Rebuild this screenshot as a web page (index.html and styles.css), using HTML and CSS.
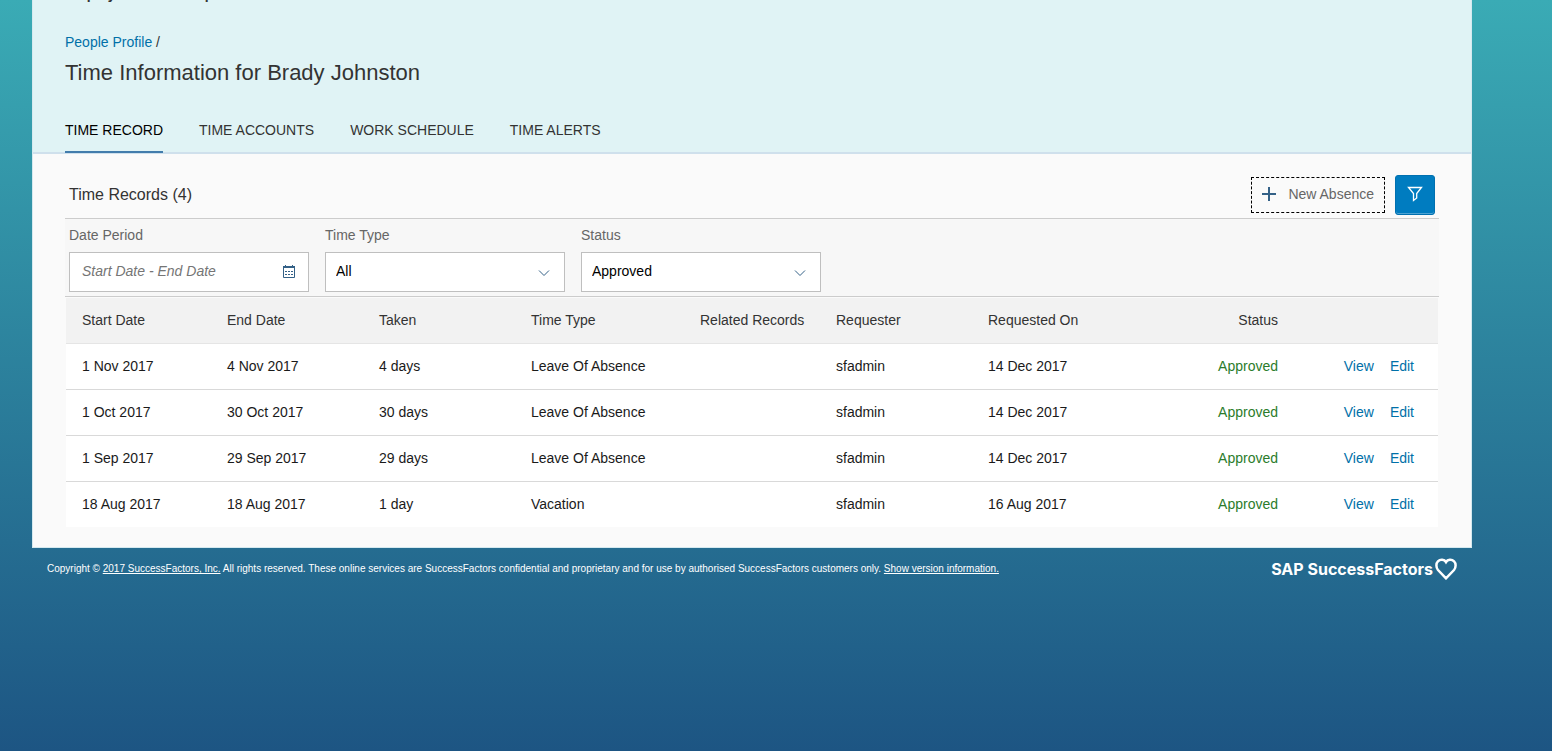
FILE: index.html
```
<!DOCTYPE html>
<html lang="en">
<head>
  <meta charset="UTF-8">
  <meta name="viewport" content="width=device-width, initial-scale=1.0">
  <title>Time Information</title>
  <link rel="stylesheet" href="styles.css">
</head>
<body>
  <main class="page">
    <header class="header">
      <div class="module">Employee Time Recap</div>
      <nav class="breadcrumb"><a href="#">People Profile</a> /</nav>
      <h1>Time Information for Brady Johnston</h1>
      <nav class="tabs">
        <a class="tab active" href="#">TIME RECORD</a>
        <a class="tab" href="#">TIME ACCOUNTS</a>
        <a class="tab" href="#">WORK SCHEDULE</a>
        <a class="tab" href="#">TIME ALERTS</a>
      </nav>
    </header>

    <section class="content">
      <div class="toolbar">
        <h2>Time Records (4)</h2>
        <button class="new-absence" type="button">
          <svg width="16" height="16" viewBox="0 0 16 16"><path d="M8 1v14M1 8h14" stroke="#346187" stroke-width="2"/></svg>
          New Absence
        </button>
        <button class="filter-button" type="button" aria-label="Filter">
          <svg width="16" height="16" viewBox="0 0 16 16" fill="none" stroke="#fff" stroke-width="1.3"><path d="M1.500 1.500h13l-4.800 6v4.500l-3.200 2.500v-7z"/></svg>
        </button>
      </div>

      <form class="filters">
        <div class="field">
          <label for="period">Date Period</label>
          <div class="control">
            <input id="period" type="text" placeholder="Start Date - End Date">
            <svg class="calendar" width="14" height="14" viewBox="0 0 14 14" fill="none" stroke="#346187"><path d="M1.500 1.500h11v11h-11z"/><path d="M1 2h12" stroke-width="2"/><path d="M3.500 0v2M10.500 0v2"/><path d="M3 6.500h2M6 6.500h2M9 6.500h2M3 9.500h2M6 9.500h2M9 9.500h2"/></svg>
          </div>
        </div>
        <div class="field">
          <label for="type">Time Type</label>
          <div class="control">
            <select id="type"><option>All</option><option>Leave Of Absence</option><option>Vacation</option></select>
            <svg class="arrow" width="12" height="8" viewBox="0 0 12 8" fill="none" stroke="#346187"><path d="M1 1.500l5 5 5-5"/></svg>
          </div>
        </div>
        <div class="field">
          <label for="status">Status</label>
          <div class="control">
            <select id="status"><option>Approved</option><option>Pending</option></select>
            <svg class="arrow" width="12" height="8" viewBox="0 0 12 8" fill="none" stroke="#346187"><path d="M1 1.500l5 5 5-5"/></svg>
          </div>
        </div>
      </form>

      <div class="table-wrap">
        <table>
          <colgroup>
            <col class="col-start"><col class="col-wide"><col class="col-wide"><col class="col-type"><col class="col-related">
            <col class="col-wide"><col class="col-wide"><col class="col-status"><col class="col-actions">
          </colgroup>
          <thead>
            <tr><th>Start Date</th><th>End Date</th><th>Taken</th><th>Time Type</th><th>Related Records</th><th>Requester</th><th>Requested On</th><th class="status">Status</th><th></th></tr>
          </thead>
          <tbody>
            <tr><td>1 Nov 2017</td><td>4 Nov 2017</td><td>4 days</td><td>Leave Of Absence</td><td></td><td>sfadmin</td><td>14 Dec 2017</td><td class="status">Approved</td><td class="actions"><a href="#">View</a><a href="#">Edit</a></td></tr>
            <tr><td>1 Oct 2017</td><td>30 Oct 2017</td><td>30 days</td><td>Leave Of Absence</td><td></td><td>sfadmin</td><td>14 Dec 2017</td><td class="status">Approved</td><td class="actions"><a href="#">View</a><a href="#">Edit</a></td></tr>
            <tr><td>1 Sep 2017</td><td>29 Sep 2017</td><td>29 days</td><td>Leave Of Absence</td><td></td><td>sfadmin</td><td>14 Dec 2017</td><td class="status">Approved</td><td class="actions"><a href="#">View</a><a href="#">Edit</a></td></tr>
            <tr><td>18 Aug 2017</td><td>18 Aug 2017</td><td>1 day</td><td>Vacation</td><td></td><td>sfadmin</td><td>16 Aug 2017</td><td class="status">Approved</td><td class="actions"><a href="#">View</a><a href="#">Edit</a></td></tr>
          </tbody>
        </table>
      </div>
    </section>
  </main>

  <footer class="footer">
    <p>Copyright © <a href="#">2017 SuccessFactors, Inc.</a> All rights reserved. These online services are SuccessFactors confidential and proprietary and for use by authorised SuccessFactors customers only. <a href="#">Show version information.</a></p>
    <div class="brand">
      <span>SAP SuccessFactors</span>
      <svg width="22" height="22" viewBox="0 0 22 22" fill="none" stroke="#fff" stroke-width="2.500"><path d="M11 20.300L3 12C.9 9.300.9 5.300 2.900 3.300 5.300.9 9.300 1.200 11 4 12.700 1.200 16.700.9 19.100 3.300 21.100 5.300 21.100 9.300 19 12z"/></svg>
    </div>
  </footer>
</body>
</html>
```
FILE: styles.css
```
* {
  box-sizing: border-box;
}
body {
  margin: 0;
  min-height: 100vh;
  padding: 0 80px 0 32px;
  font-family: "Liberation Sans", Arial, sans-serif;
  font-size: 14px;
  line-height: 16px;
  color: #333;
  background: linear-gradient(#3aabb5, #1d5583);
}
a {
  color: #0070a8;
  text-decoration: none;
}
.page {
  background: #fafafa;
  border: 1px solid #d5e9ef;
  border-top: 0;
  overflow: hidden;
}
.header {
  padding: 0 32px;
  background: #e0f3f5;
  border-bottom: 2px solid #cfe0ec;
}
.module {
  margin-top: -14px;
  font-weight: bold;
}
.breadcrumb {
  margin-top: 32px;
}
h1 {
  margin: 10px 0 0;
  font-size: 22px;
  font-weight: normal;
  line-height: 26px;
}
.tabs {
  display: flex;
  gap: 36px;
  margin: 36px 0 -1px;
}
.tab {
  padding-bottom: 13px;
  color: #333;
  border-bottom: 2px solid transparent;
}
.tab.active {
  color: #000;
  border-bottom-color: #427cac;
}
.content {
  padding: 21px 32px 20px;
}
.toolbar {
  display: flex;
  align-items: center;
  gap: 10px;
  height: 43px;
  padding: 0 4px 3px;
}
h2 {
  flex: 1;
  margin: 0;
  font-size: 16px;
  font-weight: normal;
}
button {
  font: inherit;
  cursor: pointer;
}
.new-absence {
  display: flex;
  align-items: center;
  gap: 11px;
  height: 36px;
  padding: 0 10px 2px 9px;
  color: #666;
  background: none;
  border: 1px dashed #000;
}
.filter-button {
  display: flex;
  align-items: center;
  justify-content: center;
  width: 40px;
  height: 40px;
  padding: 0 0 2px;
  background: #007cc0;
  border: 1px solid #0070b0;
  border-radius: 3px;
  box-shadow: inset 0 -1px #4da3d3;
}
.filters {
  display: flex;
  gap: 16px;
  padding: 8px 4px 4px;
  background: #f7f7f7;
  border-top: 1px solid #ccc;
  border-bottom: 1px solid #ccc;
}
.field {
  width: 240px;
}
label {
  display: block;
  margin-bottom: 9px;
  color: #666;
}
.control {
  position: relative;
}
input,
select {
  display: block;
  width: 100%;
  height: 40px;
  padding: 0 40px 2px 12px;
  font: inherit;
  color: #000;
  background: #fff;
  border: 1px solid #bfbfbf;
  border-radius: 0;
  appearance: none;
}
select {
  padding-left: 10px;
}
input::placeholder {
  color: #757575;
  font-style: italic;
}
.calendar,
.arrow {
  position: absolute;
  top: 13px;
  right: 13px;
  pointer-events: none;
}
.arrow {
  top: 17px;
  right: 15px;
}
.table-wrap {
  padding: 1px 1px 0;
}
table {
  width: 100%;
  table-layout: fixed;
  border-collapse: collapse;
  background: #fff;
}
.col-start { width: 145px; }
.col-wide { width: 152px; }
.col-type { width: 169px; }
.col-related { width: 136px; }
.col-status { width: 154px; }
th,
td {
  height: 46px;
  padding: 0 0 0 16px;
  font-weight: normal;
  text-align: left;
  border-bottom: 1px solid #d9d9d9;
}
th {
  height: 45px;
  background: #f2f2f2;
  border-bottom-color: #e5e5e5;
}
td {
  color: #1a1a1a;
}
tbody tr:last-child td {
  border-bottom: 0;
}
.status {
  text-align: right;
}
td.status {
  color: #2b7c2b;
}
.actions {
  padding-right: 24px;
  text-align: right;
}
.actions a + a {
  margin-left: 16px;
}
.footer {
  display: flex;
  align-items: center;
  justify-content: space-between;
  height: 42px;
  padding: 0 15px;
  color: #fff;
}
.footer p {
  margin: 0;
  font-size: 10px;
}
.footer a {
  color: #fff;
  text-decoration: underline;
}
.brand {
  display: flex;
  align-items: center;
  gap: 2px;
  font-family: Inter, sans-serif;
  font-size: 16px;
  font-weight: bold;
}
```
